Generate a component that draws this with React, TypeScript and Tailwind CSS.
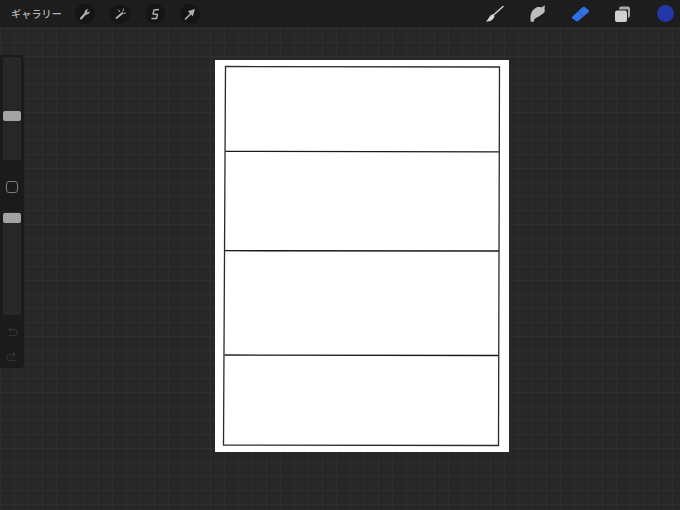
import React from "react";

function ToolButton({ children }: { children: React.ReactNode }) {
  return (
    <div className="flex h-5 w-5 items-center justify-center rounded-full bg-[#151515]">
      <svg width="14" height="14" viewBox="0 0 14 14" fill="none">
        {children}
      </svg>
    </div>
  );
}

function Slider({ height, thumbTop }: { height: string; thumbTop: string }) {
  return (
    <div className={`w-[18px] rounded-[1px] bg-[#272727] ${height}`}>
      <div className={`h-[10px] w-[18px] rounded-[2px] bg-[#a3a3a3] ${thumbTop}`} />
    </div>
  );
}

export default function App() {
  return (
    <div
      className="relative h-[510px] w-[680px] overflow-hidden bg-[#272727] bg-[linear-gradient(#2e2e2e_1px,transparent_1px),linear-gradient(90deg,#2e2e2e_1px,transparent_1px)] bg-[size:14px_14px]"
      style={{ fontFamily: '"Noto Sans CJK JP", "Liberation Sans", sans-serif' }}
    >
      {/* top bar */}
      <header className="flex h-[27px] items-center justify-between bg-[#1d1d1d] pl-[11px] pr-[6px]">
        <div className="flex items-center">
          <span className="w-[64px] text-[10px] font-medium tracking-[0.2px] text-[#b5b5b5]">ギャラリー</span>
          <div className="flex gap-[15px]">
            <ToolButton>
              <path d="M3 11.5 L7.5 6.5" stroke="#b0b0b0" strokeWidth="2.2" strokeLinecap="round" />
              <path d="M6.5 5.5 C6.5 3.2 8.5 1.8 10.5 2.3 L8.8 4.2 L9.8 5.4 L11.8 4.2 C12 6.3 10 8 7.8 7.4 Z" fill="#b0b0b0" />
            </ToolButton>
            <ToolButton>
              <path d="M3.5 11 L9.5 6" stroke="#b0b0b0" strokeWidth="1.9" strokeLinecap="round" />
              <path d="M5.5 3 L6.8 4.8 M10.5 2 L10 4 M11 6.5 L12.5 6" stroke="#b0b0b0" strokeWidth="1" strokeLinecap="round" />
            </ToolButton>
            <ToolButton>
              <path d="M11 2.5 L6 3 L5 7 L9.5 7.5 L8.5 11.5 L3.5 11.5" stroke="#b0b0b0" strokeWidth="1.4" strokeLinejoin="round" />
            </ToolButton>
            <ToolButton>
              <path d="M2.5 12 L8 6.5" stroke="#b0b0b0" strokeWidth="1.6" strokeLinecap="round" />
              <path d="M4.8 4.2 L12 2 L9.8 9.2 Z" fill="#b0b0b0" />
            </ToolButton>
          </div>
        </div>

        <div className="flex items-center">
          <svg className="mr-[19px]" width="24" height="20" viewBox="0 0 24 20" fill="none">
            <path d="M21 2.5 L11 11.5" stroke="#c8c8c8" strokeWidth="1.6" strokeLinecap="round" />
            <path d="M11.5 10.5 C9.5 10 8 11.5 7 13.5 C6.3 14.8 5.2 16.2 4 17.5 C7 17.8 11 16.5 12.5 12.5 Z" fill="#d6d6d6" />
          </svg>
          <svg className="mr-[19px]" width="24" height="20" viewBox="0 0 24 20" fill="none">
            <path d="M5.5 17.5 L5.5 12 C6 8.5 7.5 6 10 4.5 C12 2.8 14.5 2.8 16 3.5 L20 1.5 L19.5 5 C20.3 7 19.5 9 17.5 10 C15.5 11 14.5 12.5 12.5 13 L9.5 15 L8.5 18 Z" fill="#bdbdbd" />
          </svg>
          <svg className="mr-[19px]" width="24" height="20" viewBox="0 0 24 20" fill="none">
            <path d="M4 13 L14.5 3.2 C15.2 2.5 16 2.5 16.7 3 L20.5 6 C21.2 6.6 21.2 7.5 20.5 8.2 L10.5 16.8 C9.7 17.6 8.8 17.6 8 17 L4.3 14.6 C3.8 14.2 3.7 13.5 4 13 Z" fill="#2f72e6" />
            <path d="M10 7.5 L15.5 12.5" stroke="#1f4fa8" strokeWidth="0.8" />
          </svg>
          <svg className="mr-[22px]" width="24" height="20" viewBox="0 0 24 20" fill="none">
            <path d="M8 4.8 C8 3.4 9 2.5 10.4 2.5 L16.6 2.5 C18 2.5 19 3.4 19 4.8 L19 11.5 C19 13 18 14 16.6 14 L17 14 L17 5.5 L8 5.5 Z" fill="#a9a9a9" />
            <rect x="4" y="6.5" width="12" height="11.5" rx="2" fill="#d0d0d0" />
          </svg>
          <div className="h-[17px] w-[17px] rounded-full bg-[#2338a8]" />
        </div>
      </header>

      {/* page with the drawn frames */}
      <main className="ml-[215px] mt-[33px] h-[392px] w-[294px] bg-white">
        <svg width="294" height="392" viewBox="0 0 294 392" fill="none">
          <path d="M10.5 6.5 L284.5 7 L283.5 385.5 L8.5 385 Z" stroke="#2a2a2a" strokeWidth="1.3" />
          <path d="M10.5 91.3 L284 91.8" stroke="#1a1a1a" strokeWidth="1.3" />
          <path d="M10 190.7 L284 191" stroke="#1a1a1a" strokeWidth="1.3" />
          <path d="M9.5 295 L283.5 295.5" stroke="#1a1a1a" strokeWidth="1.3" />
        </svg>
      </main>

      {/* brush size and opacity sidebar */}
      <aside className="absolute left-0 top-[55px] flex h-[313px] w-6 flex-col items-center rounded-r-[4px] bg-[#1b1b1b] pt-[2px]">
        <Slider height="h-[103px]" thumbTop="mt-[54px]" />
        <div className="mt-[21px] h-[12px] w-[12px] rounded-[3px] border border-[#7d7d7d]" />
        <Slider height="h-[103px] mt-[19px]" thumbTop="mt-[1px]" />
        <svg className="mt-[11px]" width="14" height="14" viewBox="0 0 14 14" fill="none">
          <path d="M4 3.5 L10 3.5 C11.5 3.5 12 5 12 6.5 C12 8 11.5 9.5 10 9.5 L4 9.5 M4 3.5 L6 1.5 M4 3.5 L6 5.5" stroke="#333333" strokeWidth="1.2" />
        </svg>
        <svg className="mt-[11px]" width="14" height="14" viewBox="0 0 14 14" fill="none">
          <path d="M10 3.5 L4 3.5 C2.5 3.5 2 5 2 6.5 C2 8 2.5 9.5 4 9.5 L10 9.5 M10 3.5 L8 1.5 M10 3.5 L8 5.5" stroke="#333333" strokeWidth="1.2" />
        </svg>
      </aside>
    </div>
  );
}
